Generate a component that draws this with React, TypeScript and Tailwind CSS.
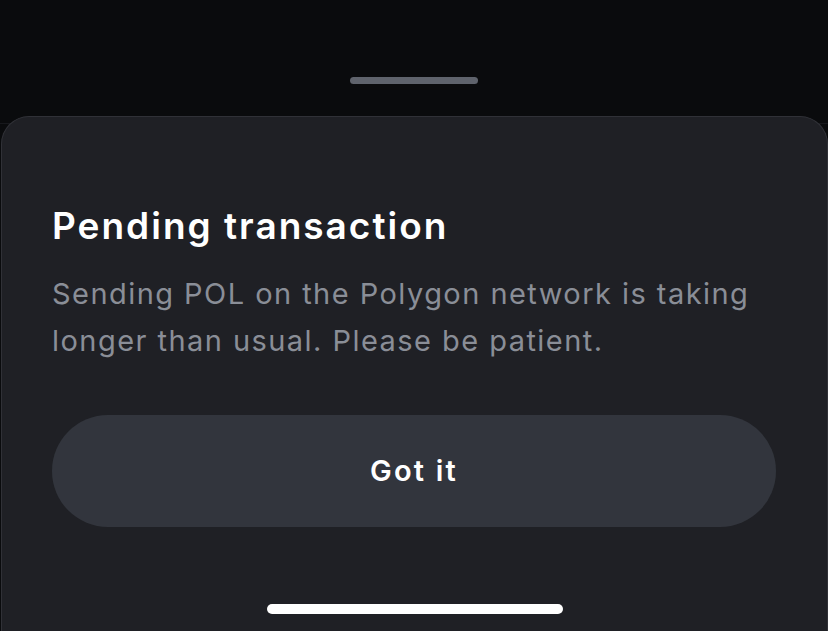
export default function App() {
  return (
    <div
      className="relative h-[631px] w-[828px] overflow-hidden bg-[#0a0b0d]"
      style={{ fontFamily: "Inter, 'Liberation Sans', sans-serif" }}
    >
      {/* underlying page */}
      <div className="flex h-[124px] justify-center border-b border-[#17181c] pt-[77px]">
        <div className="h-[7px] w-[128px] rounded-full bg-[#5f636c]" />
      </div>

      {/* bottom sheet */}
      <div className="absolute left-[1px] right-0 top-[116px] bottom-0 rounded-t-[28px] border border-b-0 border-[#303137] bg-[#1f2025]">
        <div className="flex flex-col px-[50px] pt-[87px]">
          <h1 className="text-[37px] font-semibold leading-[44px] tracking-[2px] text-white">
            Pending transaction
          </h1>
          <p className="mt-[22px] w-[724px] text-[29px] leading-[47px] tracking-[1.45px] text-[#8a8e97]">
            Sending POL on the Polygon network is taking longer than usual. Please be patient.
          </p>
          <button className="mt-[51px] flex h-[112px] w-[724px] items-center justify-center rounded-full bg-[#32353d] text-[29px] font-semibold tracking-[2.2px] text-white">
            Got it
          </button>
        </div>
        <div className="mt-[77px] flex justify-center">
          <div className="h-[10px] w-[296px] rounded-full bg-white" />
        </div>
      </div>
    </div>
  );
}
